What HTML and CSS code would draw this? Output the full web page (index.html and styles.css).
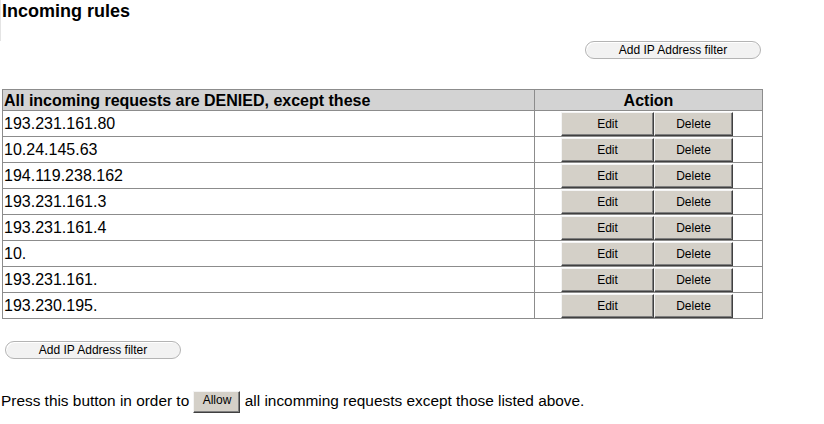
FILE: index.html
```html
<!DOCTYPE html>
<html lang="en">
<head>
    <meta charset="UTF-8">
    <title>Incoming rules</title>
    <link rel="stylesheet" href="styles.css">
</head>
<body>
    <div class="page">
        <h1 class="title">Incoming rules</h1>
        <div class="top-bar">
            <button type="button" class="pill">Add IP Address filter</button>
        </div>
        <table class="rules">
            <thead>
                <tr>
                    <th class="col-ip">All incoming requests are DENIED, except these</th>
                    <th class="col-action">Action</th>
                </tr>
            </thead>
            <tbody>
                <tr><td>193.231.161.80</td><td class="actions"><button class="btn btn-edit">Edit</button><button class="btn btn-delete">Delete</button></td></tr>
                <tr><td>10.24.145.63</td><td class="actions"><button class="btn btn-edit">Edit</button><button class="btn btn-delete">Delete</button></td></tr>
                <tr><td>194.119.238.162</td><td class="actions"><button class="btn btn-edit">Edit</button><button class="btn btn-delete">Delete</button></td></tr>
                <tr><td>193.231.161.3</td><td class="actions"><button class="btn btn-edit">Edit</button><button class="btn btn-delete">Delete</button></td></tr>
                <tr><td>193.231.161.4</td><td class="actions"><button class="btn btn-edit">Edit</button><button class="btn btn-delete">Delete</button></td></tr>
                <tr><td>10.</td><td class="actions"><button class="btn btn-edit">Edit</button><button class="btn btn-delete">Delete</button></td></tr>
                <tr><td>193.231.161.</td><td class="actions"><button class="btn btn-edit">Edit</button><button class="btn btn-delete">Delete</button></td></tr>
                <tr><td>193.230.195.</td><td class="actions"><button class="btn btn-edit">Edit</button><button class="btn btn-delete">Delete</button></td></tr>
            </tbody>
        </table>
        <div class="bottom-bar">
            <button type="button" class="pill">Add IP Address filter</button>
        </div>
        <p class="allow-line">Press this button in order to <button type="button" class="btn btn-allow">Allow</button> all incomming requests except those listed above.</p>
    </div>
</body>
</html>
```

FILE: styles.css
```css
body {
    margin: 0;
    background-color: #fff;
    color: #000;
    font-family: "Liberation Sans", Arial, sans-serif;
}
.page {
    width: 824px;
}
.title {
    margin: 0;
    padding: 1px 0 20px 1px;
    border-left: 1px solid #e4e4e4;
    font-size: 18px;
    line-height: 20px;
    font-weight: bold;
}
.top-bar {
    display: flex;
    justify-content: flex-end;
    width: 761px;
}
.pill {
    width: 176px;
    height: 18px;
    padding: 0;
    border: 1px solid #b4b4b4;
    border-radius: 9px;
    background-color: #f2f2f2;
    box-shadow: inset 1px 1px 0 #fff;
    font-family: "Liberation Sans", Arial, sans-serif;
    font-size: 12px;
    color: #000;
}
.rules {
    margin: 30px 0 0 2px;
    width: 761px;
    border-collapse: collapse;
    border: 1px solid #8c8c8c;
    font-size: 16px;
}
.rules th {
    height: 20px;
    padding: 0 1px;
    background-color: #d3d3d3;
    border: 1px solid #8c8c8c;
    font-weight: bold;
    line-height: 19px;
}
.rules .col-ip {
    width: 529px;
    text-align: left;
}
.rules .col-action {
    text-align: center;
}
.rules td {
    height: 25px;
    padding: 0 1px;
    border: 1px solid #8c8c8c;
    line-height: 20px;
}
.rules td.actions {
    padding: 0 0 0 26px;
    font-size: 0;
}
.btn {
    height: 24px;
    padding: 0;
    border: 1px solid;
    border-color: #f4f4f4 #404040 #404040 #f4f4f4;
    background-color: #d4d0c8;
    box-shadow: inset -1px -1px 0 #808080;
    font-family: "Liberation Sans", Arial, sans-serif;
    font-size: 12px;
    color: #000;
    vertical-align: middle;
}
.btn-edit {
    width: 93px;
}
.btn-delete {
    width: 79px;
}
.bottom-bar {
    margin: 21px 0 0 5px;
}
.allow-line {
    margin: 30px 0 0 1px;
    font-size: 15.4px;
    line-height: 24px;
}
.btn-allow {
    width: 47px;
    height: 22px;
    padding: 0 0 4px;
}
```
